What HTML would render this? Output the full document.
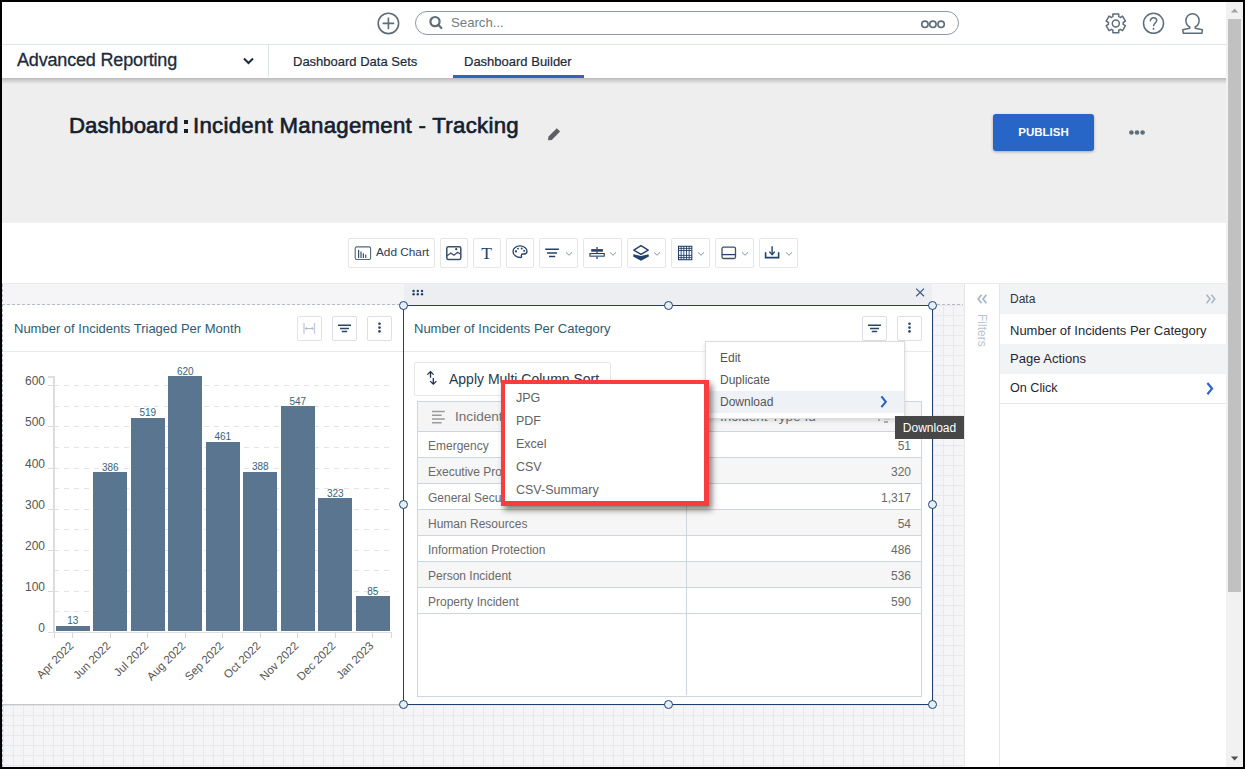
<!DOCTYPE html>
<html><head><meta charset="utf-8">
<style>
*{box-sizing:border-box;margin:0;padding:0}
html,body{width:1245px;height:769px;overflow:hidden;background:#000;font-family:"Liberation Sans",sans-serif}
.abs{position:absolute}
#app{position:absolute;left:2px;top:2px;width:1241px;height:765px;background:#fff;overflow:hidden}
/* everything below positioned with page coords via #pg wrapper offset -2 */
#pg{position:absolute;left:-2px;top:-2px;width:1245px;height:769px}
.t{position:absolute;white-space:nowrap;line-height:1}
</style></head><body>
<div id="app"><div id="pg">

<!-- top bar -->
<div class="abs" style="left:0;top:44px;width:1226px;height:1px;background:#dfe4e7"></div>
<svg class="abs" style="left:376px;top:11px" width="25" height="25" viewBox="0 0 25 25">
  <circle cx="12.4" cy="12.4" r="10.2" fill="none" stroke="#5d6e7a" stroke-width="1.6"/>
  <path d="M12.4 6.6V18.2M6.6 12.4H18.2" stroke="#5d6e7a" stroke-width="1.6"/>
</svg>
<div class="abs" style="left:415px;top:11px;width:544px;height:24px;border:1px solid #8c98a2;border-radius:12px"></div>
<svg class="abs" style="left:427px;top:14px" width="18" height="18" viewBox="0 0 18 18">
  <circle cx="8" cy="7.6" r="4.6" fill="none" stroke="#5d6e7a" stroke-width="2.2"/>
  <path d="M11.2 10.8L14.4 14" stroke="#5d6e7a" stroke-width="2.2" stroke-linecap="round"/>
</svg>
<div class="t" style="left:451px;top:16px;font-size:13.2px;color:#6e7d88">Search...</div>
<svg class="abs" style="left:918px;top:17px" width="30" height="14" viewBox="0 0 30 14">
  <circle cx="6.9" cy="7.3" r="3.2" fill="none" stroke="#5d6e7a" stroke-width="1.6"/>
  <circle cx="14.9" cy="7.3" r="3.2" fill="none" stroke="#5d6e7a" stroke-width="1.6"/>
  <circle cx="23.1" cy="7.3" r="3.2" fill="none" stroke="#5d6e7a" stroke-width="1.6"/>
</svg>
<!-- gear -->
<svg class="abs" style="left:1104px;top:12px" width="23" height="23" viewBox="0 0 23 23">
  <path id="gear" fill="none" stroke="#5d6e7a" stroke-width="1.5" stroke-linejoin="round" d="M8.92 4.58 L8.87 1.94 L14.73 1.94 L14.68 4.58 A7.4 7.4 0 0 1 16.26 5.50 L18.53 4.14 L21.45 9.20 L19.14 10.49 A7.4 7.4 0 0 1 19.14 12.31 L21.45 13.60 L18.53 18.66 L16.26 17.30 A7.4 7.4 0 0 1 14.68 18.22 L14.73 20.86 L8.87 20.86 L8.92 18.22 A7.4 7.4 0 0 1 7.34 17.30 L5.07 18.66 L2.15 13.60 L4.46 12.31 A7.4 7.4 0 0 1 4.46 10.49 L2.15 9.20 L5.07 4.14 L7.34 5.50 A7.4 7.4 0 0 1 8.92 4.58 Z"/>
  <circle cx="11.8" cy="11.4" r="3.5" fill="none" stroke="#5d6e7a" stroke-width="1.5"/>
</svg>
<svg class="abs" style="left:1142px;top:12px" width="23" height="23" viewBox="0 0 23 23">
  <circle cx="11.5" cy="11.3" r="10" fill="none" stroke="#5d6e7a" stroke-width="1.5"/>
  <path d="M8.4 8.8C8.4 6.9 9.8 5.8 11.6 5.8C13.4 5.8 14.7 7 14.7 8.6C14.7 10.4 12.2 11 11.6 13.6" fill="none" stroke="#5d6e7a" stroke-width="1.5" stroke-linecap="round"/>
  <circle cx="11.5" cy="16.7" r="1" fill="#5d6e7a"/>
</svg>
<svg class="abs" style="left:1181px;top:12px" width="23" height="23" viewBox="0 0 23 23">
  <path d="M8.8 16.3V14.9C6.4 13.7 4.9 11.3 4.9 8.4C4.9 4.8 7.8 1.8 11.5 1.8C15.2 1.8 18.1 4.8 18.1 8.4C18.1 11.3 16.6 13.7 14.2 14.9V16.3L21.4 17.8L20.9 21.3H2.3L1.8 17.8Z" fill="none" stroke="#5d6e7a" stroke-width="1.5" stroke-linejoin="round"/>
</svg>

<!-- nav -->
<div class="t" style="left:17px;top:51px;font-size:18px;letter-spacing:-0.17px;-webkit-text-stroke:0.3px #1c2b39;color:#1c2b39">Advanced Reporting</div>
<svg class="abs" style="left:242px;top:56px" width="13" height="10" viewBox="0 0 13 10">
  <path d="M2 2.5L6.5 7L11 2.5" fill="none" stroke="#1c2b39" stroke-width="2"/>
</svg>
<div class="abs" style="left:268px;top:45px;width:1px;height:32px;background:#dfe4e7"></div>
<div class="t" style="left:293px;top:55px;font-size:13px;-webkit-text-stroke:0.2px #1c2b39;color:#1c2b39">Dashboard Data Sets</div>
<div class="t" style="left:464px;top:55px;font-size:13px;-webkit-text-stroke:0.2px #1c2b39;color:#1c2b39">Dashboard Builder</div>
<div class="abs" style="left:453px;top:75px;width:131px;height:4px;background:#2a66c8"></div>

<!-- gray title area -->
<div class="abs" style="left:0;top:78px;width:1226px;height:145px;background:#eeeeee"></div>
<div class="abs" style="left:0;top:78px;width:1226px;height:6px;background:linear-gradient(rgba(0,0,0,.22),rgba(0,0,0,0))"></div>


<div class="t" style="left:69px;top:115px;font-size:22.2px;letter-spacing:0.1px;-webkit-text-stroke:0.65px #13202e;color:#13202e">Dashboard</div>
<div class="abs" style="left:184px;top:120px;width:4px;height:4px;background:#13202e"></div>
<div class="abs" style="left:184px;top:129px;width:4px;height:4px;background:#13202e"></div>
<div class="t" style="left:193px;top:115px;font-size:22.2px;letter-spacing:0.3px;-webkit-text-stroke:0.65px #13202e;color:#13202e">Incident Management - Tracking</div>
<svg class="abs" style="left:547px;top:126px" width="14" height="15" viewBox="0 0 14 15">
  <path d="M1 14.2L1.5 10.6L9.8 2.3L13.1 5.6L4.8 13.9Z" fill="#5e5f66"/>
</svg>
<div class="abs" style="left:993px;top:114px;width:101px;height:37px;background:#2766c6;border-radius:3px;box-shadow:0 1px 3px rgba(0,0,0,.3)"></div>
<div class="t" style="left:993px;top:127px;width:101px;text-align:center;font-size:11.5px;font-weight:bold;color:#fff">PUBLISH</div>
<svg class="abs" style="left:1126px;top:127px" width="22" height="10" viewBox="0 0 22 10">
  <circle cx="5.4" cy="5.5" r="2.3" fill="#5d6e7a"/><circle cx="11" cy="5.5" r="2.3" fill="#5d6e7a"/><circle cx="16.6" cy="5.5" r="2.3" fill="#5d6e7a"/>
</svg>

<!-- toolbar -->
<div class="abs" style="left:348px;top:238px;width:87px;height:30px;border:1px solid #e6e6e6;border-radius:2px"></div>
<svg class="abs" style="left:354px;top:246px" width="18" height="15" viewBox="0 0 18 15">
  <rect x="1.2" y="0.9" width="15.4" height="12.6" rx="1.5" fill="none" stroke="#55657a" stroke-width="1.1"/>
  <path d="M4.6 4V12M7 5.5V12M9.4 7.2V12M11.8 8.4V12" stroke="#3b4f6b" stroke-width="1.2"/>
</svg>
<div class="t" style="left:376px;top:247px;font-size:11.8px;color:#2b3d55">Add Chart</div>
<div class="abs" style="left:440px;top:238px;width:28px;height:30px;border:1px solid #e6e6e6;border-radius:2px"></div>
<svg class="abs" style="left:445px;top:245px" width="18" height="16" viewBox="0 0 18 16">
  <rect x="1.8" y="1.8" width="14" height="12.6" rx="1.5" fill="none" stroke="#3b4f6b" stroke-width="1.5"/>
  <path d="M1.8 11L5.8 8L9 10.3L12.6 7.2L15.8 9.2" fill="none" stroke="#3b4f6b" stroke-width="1.2"/>
  <circle cx="11.2" cy="4.2" r="1.1" fill="#2b3d55"/>
</svg>
<div class="abs" style="left:473px;top:238px;width:28px;height:30px;border:1px solid #e6e6e6;border-radius:2px"></div>
<div class="t" style="left:481.3px;top:245px;font-family:'Liberation Serif',serif;font-size:17.5px;color:#23426b">T</div>
<div class="abs" style="left:506px;top:238px;width:28px;height:30px;border:1px solid #e6e6e6;border-radius:2px"></div>
<svg class="abs" style="left:511px;top:244px" width="18" height="16" viewBox="0 0 18 16">
  <path d="M9.8 13.5C5.4 13.5 2 10.6 2 7.4C2 4.2 5.2 1.9 9 1.9C12.8 1.9 16 4.2 16 7.2C16 9 14.6 10 13 10H11.8C10.9 10 10.3 10.7 10.3 11.4C10.3 11.9 10.6 12.2 10.6 12.7C10.6 13.2 10.3 13.5 9.8 13.5Z" fill="none" stroke="#23426b" stroke-width="1.3"/>
  <circle cx="4.9" cy="7.4" r="1.1" fill="#23426b"/><circle cx="7" cy="4.6" r="0.95" fill="#23426b"/><circle cx="10.7" cy="4.5" r="0.95" fill="#23426b"/><circle cx="13.1" cy="6.7" r="0.95" fill="#23426b"/>
</svg>
<div class="abs" style="left:539px;top:238px;width:39px;height:30px;border:1px solid #e6e6e6;border-radius:2px"></div>
<svg class="abs" style="left:544px;top:243px" width="20" height="20" viewBox="0 0 20 20"><path d="M1.2 6.2H14.9M3 10H13M5 13.4H11.2" stroke="#23426b" stroke-width="1.5"/></svg>
<svg class="abs" style="left:565px;top:251px" width="8" height="6" viewBox="0 0 8 6"><path d="M1 1.4L4 4.2L7 1.4" fill="none" stroke="#8194b8" stroke-width="1"/></svg>
<div class="abs" style="left:583px;top:238px;width:39px;height:30px;border:1px solid #e6e6e6;border-radius:2px"></div>
<svg class="abs" style="left:588px;top:243px" width="20" height="20" viewBox="0 0 20 20"><rect x="3.2" y="6.1" width="11.7" height="2.6" fill="#23426b"/><rect x="1.95" y="10.55" width="14.3" height="2.6" fill="none" stroke="#23426b" stroke-width="1.1"/><path d="M9 4V6.1M9 8.7V10M9 13.7V15.9" stroke="#23426b" stroke-width="1.3"/></svg>
<svg class="abs" style="left:609px;top:251px" width="8" height="6" viewBox="0 0 8 6"><path d="M1 1.4L4 4.2L7 1.4" fill="none" stroke="#8194b8" stroke-width="1"/></svg>
<div class="abs" style="left:627px;top:238px;width:39px;height:30px;border:1px solid #e6e6e6;border-radius:2px"></div>
<svg class="abs" style="left:632px;top:243px" width="20" height="20" viewBox="0 0 20 20"><path d="M9 2.6L16.2 7.1L9 11.3L1.8 7.1Z" fill="none" stroke="#23426b" stroke-width="1.4" stroke-linejoin="round"/><path d="M1.5 11.2L9 12.9L16.5 11.2L16.9 13.4L9 17.8L1.1 13.4Z" fill="#23426b"/></svg>
<svg class="abs" style="left:653px;top:251px" width="8" height="6" viewBox="0 0 8 6"><path d="M1 1.4L4 4.2L7 1.4" fill="none" stroke="#8194b8" stroke-width="1"/></svg>
<div class="abs" style="left:671px;top:238px;width:39px;height:30px;border:1px solid #e6e6e6;border-radius:2px"></div>
<svg class="abs" style="left:676px;top:243px" width="20" height="20" viewBox="0 0 20 20"><rect x="2.5" y="3.3" width="13.3" height="13.4" fill="none" stroke="#23426b" stroke-width="1.1"/><path d="M5.15 3.3V16.7M7.8 3.3V16.7M10.5 3.3V16.7M13.15 3.3V16.7M2.5 5.4H15.8M2.5 7.5H15.8M2.5 12.4H15.8M2.5 14.6H15.8" stroke="#23426b" stroke-width="0.9"/></svg>
<svg class="abs" style="left:697px;top:251px" width="8" height="6" viewBox="0 0 8 6"><path d="M1 1.4L4 4.2L7 1.4" fill="none" stroke="#8194b8" stroke-width="1"/></svg>
<div class="abs" style="left:715px;top:238px;width:39px;height:30px;border:1px solid #e6e6e6;border-radius:2px"></div>
<svg class="abs" style="left:720px;top:243px" width="20" height="20" viewBox="0 0 20 20"><rect x="2" y="4.2" width="13.5" height="11.3" rx="1.5" fill="none" stroke="#3b4f6b" stroke-width="1.3"/><path d="M2 11.6H15.5" stroke="#23426b" stroke-width="1.3"/></svg>
<svg class="abs" style="left:741px;top:251px" width="8" height="6" viewBox="0 0 8 6"><path d="M1 1.4L4 4.2L7 1.4" fill="none" stroke="#8194b8" stroke-width="1"/></svg>
<div class="abs" style="left:759px;top:238px;width:39px;height:30px;border:1px solid #e6e6e6;border-radius:2px"></div>
<svg class="abs" style="left:764px;top:243px" width="20" height="20" viewBox="0 0 20 20"><path d="M1.6 9.2V14.6H14.6V9.2" fill="none" stroke="#23426b" stroke-width="1.6"/><path d="M8.1 3.3V11" stroke="#23426b" stroke-width="1.4"/><path d="M5.4 8.6L8.1 11.6L10.8 8.6" fill="none" stroke="#23426b" stroke-width="1.4"/></svg>
<svg class="abs" style="left:785px;top:251px" width="8" height="6" viewBox="0 0 8 6"><path d="M1 1.4L4 4.2L7 1.4" fill="none" stroke="#8194b8" stroke-width="1"/></svg>

<!-- DASH -->
<div class="abs" style="left:0;top:284px;width:964px;height:486px;background:#f5f5f7"></div>
<div class="abs" style="left:0;top:305px;width:963px;height:464px;background-image:linear-gradient(to right,#e9e9ec 1px,transparent 1px),linear-gradient(to bottom,#e9e9ec 1px,transparent 1px);background-size:10px 10px;background-position:3px 10px"></div>
<div class="abs" style="left:0;top:283px;width:1226px;height:1px;background:#ebebed"></div>
<div class="abs" style="left:2px;top:304px;width:961px;height:1px;background-image:linear-gradient(to right,#b4bcc6 60%,transparent 60%);background-size:5px 1px"></div>
<div class="abs" style="left:3px;top:305px;width:401px;height:399px;background:#fff;box-shadow:0 1px 1px rgba(0,0,0,.18)"></div>
<div class="abs" style="left:2px;top:284px;width:1px;height:485px;background-image:linear-gradient(to bottom,#b4bcc6 60%,transparent 60%);background-size:1px 5px"></div>
<div class="t" style="left:14px;top:322px;font-size:13px;color:#2c5d74">Number of Incidents Triaged Per Month</div>
<div class="abs" style="left:3px;top:351px;width:400px;height:1px;background:#e8eaed"></div>
<div class="abs" style="left:297px;top:316px;width:25px;height:25px;border:1px solid #dcdfe3;border-radius:2px;opacity:0.9"></div><svg class="abs" style="left:297px;top:316px;opacity:0.9" width="25" height="25" viewBox="0 0 25 25"><path d="M7 7V17.7M17.5 7V17.7" stroke="#bcc6d3" stroke-width="1.3"/><path d="M8.2 12.5H16.3M9.8 11L8.3 12.5L9.8 14M14.7 11L16.2 12.5L14.7 14" fill="none" stroke="#a9b5c4" stroke-width="1"/></svg>
<div class="abs" style="left:332px;top:316px;width:25px;height:25px;border:1px solid #dcdfe3;border-radius:2px;opacity:1"></div><svg class="abs" style="left:332px;top:316px;opacity:1" width="25" height="25" viewBox="0 0 25 25"><path d="M6 9.2H19M8 12.4H17M9.8 15.5H15.2" stroke="#2b4566" stroke-width="1.5"/></svg>
<div class="abs" style="left:367px;top:316px;width:25px;height:25px;border:1px solid #dcdfe3;border-radius:2px;opacity:1"></div><svg class="abs" style="left:367px;top:316px;opacity:1" width="25" height="25" viewBox="0 0 25 25"><circle cx="12.5" cy="7.8" r="1.3" fill="#2b4566"/><circle cx="12.5" cy="11.6" r="1.3" fill="#2b4566"/><circle cx="12.5" cy="15.4" r="1.3" fill="#2b4566"/></svg>
<div class="abs" style="left:55px;top:611px;width:334px;height:1px;background-image:linear-gradient(to right,#e3e3e3 50%,transparent 50%);background-size:10px 1px;background-position:-1px 0"></div>
<div class="abs" style="left:55px;top:591px;width:334px;height:1px;background-image:linear-gradient(to right,#e3e3e3 50%,transparent 50%);background-size:10px 1px;background-position:-1px 0"></div>
<div class="abs" style="left:55px;top:570px;width:334px;height:1px;background-image:linear-gradient(to right,#e3e3e3 50%,transparent 50%);background-size:10px 1px;background-position:-1px 0"></div>
<div class="abs" style="left:55px;top:550px;width:334px;height:1px;background-image:linear-gradient(to right,#e3e3e3 50%,transparent 50%);background-size:10px 1px;background-position:-1px 0"></div>
<div class="abs" style="left:55px;top:529px;width:334px;height:1px;background-image:linear-gradient(to right,#e3e3e3 50%,transparent 50%);background-size:10px 1px;background-position:-1px 0"></div>
<div class="abs" style="left:55px;top:509px;width:334px;height:1px;background-image:linear-gradient(to right,#e3e3e3 50%,transparent 50%);background-size:10px 1px;background-position:-1px 0"></div>
<div class="abs" style="left:55px;top:488px;width:334px;height:1px;background-image:linear-gradient(to right,#e3e3e3 50%,transparent 50%);background-size:10px 1px;background-position:-1px 0"></div>
<div class="abs" style="left:55px;top:468px;width:334px;height:1px;background-image:linear-gradient(to right,#e3e3e3 50%,transparent 50%);background-size:10px 1px;background-position:-1px 0"></div>
<div class="abs" style="left:55px;top:447px;width:334px;height:1px;background-image:linear-gradient(to right,#e3e3e3 50%,transparent 50%);background-size:10px 1px;background-position:-1px 0"></div>
<div class="abs" style="left:55px;top:426px;width:334px;height:1px;background-image:linear-gradient(to right,#e3e3e3 50%,transparent 50%);background-size:10px 1px;background-position:-1px 0"></div>
<div class="abs" style="left:55px;top:406px;width:334px;height:1px;background-image:linear-gradient(to right,#e3e3e3 50%,transparent 50%);background-size:10px 1px;background-position:-1px 0"></div>
<div class="abs" style="left:55px;top:385px;width:334px;height:1px;background-image:linear-gradient(to right,#e3e3e3 50%,transparent 50%);background-size:10px 1px;background-position:-1px 0"></div>
<div class="abs" style="left:48px;top:632px;width:6px;height:1px;background:#d9d9d9"></div>
<div class="t" style="left:15px;top:622px;width:30px;text-align:right;font-size:12px;color:#555">0</div>
<div class="abs" style="left:48px;top:591px;width:6px;height:1px;background:#d9d9d9"></div>
<div class="t" style="left:15px;top:581px;width:30px;text-align:right;font-size:12px;color:#555">100</div>
<div class="abs" style="left:48px;top:550px;width:6px;height:1px;background:#d9d9d9"></div>
<div class="t" style="left:15px;top:540px;width:30px;text-align:right;font-size:12px;color:#555">200</div>
<div class="abs" style="left:48px;top:509px;width:6px;height:1px;background:#d9d9d9"></div>
<div class="t" style="left:15px;top:499px;width:30px;text-align:right;font-size:12px;color:#555">300</div>
<div class="abs" style="left:48px;top:468px;width:6px;height:1px;background:#d9d9d9"></div>
<div class="t" style="left:15px;top:458px;width:30px;text-align:right;font-size:12px;color:#555">400</div>
<div class="abs" style="left:48px;top:426px;width:6px;height:1px;background:#d9d9d9"></div>
<div class="t" style="left:15px;top:416px;width:30px;text-align:right;font-size:12px;color:#555">500</div>
<div class="abs" style="left:48px;top:385px;width:6px;height:1px;background:#d9d9d9"></div>
<div class="t" style="left:15px;top:375px;width:30px;text-align:right;font-size:12px;color:#555">600</div>
<div class="abs" style="left:53px;top:376px;width:2px;height:257px;background:#dcdcdc"></div>
<div class="abs" style="left:48px;top:376px;width:6px;height:1.5px;background:#dedede"></div>
<div class="abs" style="left:48px;top:632px;width:344px;height:1px;background:#e0e0e0"></div>
<div class="abs" style="left:54px;top:632px;width:1px;height:6px;background:#d9d9d9"></div>
<div class="abs" style="left:391px;top:632px;width:1px;height:6px;background:#d9d9d9"></div>
<div class="abs" style="left:55.9px;top:625.7px;width:33.9px;height:5.3px;background:#5a758f"></div>
<div class="t" style="left:45.9px;top:616.2px;width:53.9px;text-align:center;font-size:10px;color:#346579">13</div>
<div class="abs" style="left:72.3px;top:632px;width:1px;height:6px;background:#d9d9d9"></div>
<div class="t" style="left:7.8px;top:640px;width:60px;text-align:right;font-size:11.5px;color:#555;transform-origin:100% 0;transform:rotate(-45deg)">Apr 2022</div>
<div class="abs" style="left:93.4px;top:472.4px;width:33.9px;height:158.6px;background:#5a758f"></div>
<div class="t" style="left:83.4px;top:462.9px;width:53.9px;text-align:center;font-size:10px;color:#346579">386</div>
<div class="abs" style="left:109.9px;top:632px;width:1px;height:6px;background:#d9d9d9"></div>
<div class="t" style="left:45.4px;top:640px;width:60px;text-align:right;font-size:11.5px;color:#555;transform-origin:100% 0;transform:rotate(-45deg)">Jun 2022</div>
<div class="abs" style="left:130.9px;top:417.7px;width:33.9px;height:213.3px;background:#5a758f"></div>
<div class="t" style="left:120.9px;top:408.2px;width:53.9px;text-align:center;font-size:10px;color:#346579">519</div>
<div class="abs" style="left:147.3px;top:632px;width:1px;height:6px;background:#d9d9d9"></div>
<div class="t" style="left:82.8px;top:640px;width:60px;text-align:right;font-size:11.5px;color:#555;transform-origin:100% 0;transform:rotate(-45deg)">Jul 2022</div>
<div class="abs" style="left:168.4px;top:376.2px;width:33.9px;height:254.8px;background:#5a758f"></div>
<div class="t" style="left:158.4px;top:366.7px;width:53.9px;text-align:center;font-size:10px;color:#346579">620</div>
<div class="abs" style="left:184.8px;top:632px;width:1px;height:6px;background:#d9d9d9"></div>
<div class="t" style="left:120.3px;top:640px;width:60px;text-align:right;font-size:11.5px;color:#555;transform-origin:100% 0;transform:rotate(-45deg)">Aug 2022</div>
<div class="abs" style="left:205.9px;top:441.5px;width:33.9px;height:189.5px;background:#5a758f"></div>
<div class="t" style="left:195.9px;top:432.0px;width:53.9px;text-align:center;font-size:10px;color:#346579">461</div>
<div class="abs" style="left:222.3px;top:632px;width:1px;height:6px;background:#d9d9d9"></div>
<div class="t" style="left:157.8px;top:640px;width:60px;text-align:right;font-size:11.5px;color:#555;transform-origin:100% 0;transform:rotate(-45deg)">Sep 2022</div>
<div class="abs" style="left:243.4px;top:471.5px;width:33.9px;height:159.5px;background:#5a758f"></div>
<div class="t" style="left:233.4px;top:462.0px;width:53.9px;text-align:center;font-size:10px;color:#346579">388</div>
<div class="abs" style="left:259.9px;top:632px;width:1px;height:6px;background:#d9d9d9"></div>
<div class="t" style="left:195.4px;top:640px;width:60px;text-align:right;font-size:11.5px;color:#555;transform-origin:100% 0;transform:rotate(-45deg)">Oct 2022</div>
<div class="abs" style="left:280.9px;top:406.2px;width:33.9px;height:224.8px;background:#5a758f"></div>
<div class="t" style="left:270.9px;top:396.7px;width:53.9px;text-align:center;font-size:10px;color:#346579">547</div>
<div class="abs" style="left:297.3px;top:632px;width:1px;height:6px;background:#d9d9d9"></div>
<div class="t" style="left:232.8px;top:640px;width:60px;text-align:right;font-size:11.5px;color:#555;transform-origin:100% 0;transform:rotate(-45deg)">Nov 2022</div>
<div class="abs" style="left:318.4px;top:498.2px;width:33.9px;height:132.8px;background:#5a758f"></div>
<div class="t" style="left:308.4px;top:488.7px;width:53.9px;text-align:center;font-size:10px;color:#346579">323</div>
<div class="abs" style="left:334.8px;top:632px;width:1px;height:6px;background:#d9d9d9"></div>
<div class="t" style="left:270.3px;top:640px;width:60px;text-align:right;font-size:11.5px;color:#555;transform-origin:100% 0;transform:rotate(-45deg)">Dec 2022</div>
<div class="abs" style="left:355.9px;top:596.1px;width:33.9px;height:34.9px;background:#5a758f"></div>
<div class="t" style="left:345.9px;top:586.6px;width:53.9px;text-align:center;font-size:10px;color:#346579">85</div>
<div class="abs" style="left:372.3px;top:632px;width:1px;height:6px;background:#d9d9d9"></div>
<div class="t" style="left:307.8px;top:640px;width:60px;text-align:right;font-size:11.5px;color:#555;transform-origin:100% 0;transform:rotate(-45deg)">Jan 2023</div>
<div class="abs" style="left:404px;top:284px;width:528px;height:21px;background:#eceef2"></div>
<svg class="abs" style="left:411px;top:288px" width="14" height="9" viewBox="0 0 14 9"><g fill="#24406a"><circle cx="2.6" cy="3" r="1.2"/><circle cx="6.8" cy="3" r="1.2"/><circle cx="11" cy="3" r="1.2"/><circle cx="2.6" cy="6.3" r="1.2"/><circle cx="6.8" cy="6.3" r="1.2"/><circle cx="11" cy="6.3" r="1.2"/></g></svg>
<svg class="abs" style="left:914px;top:286px" width="12" height="12" viewBox="0 0 12 12"><path d="M2.2 2.6L10 10.2M10 2.6L2.2 10.2" stroke="#3c5b86" stroke-width="1.2"/></svg>
<div class="abs" style="left:403px;top:305px;width:530px;height:400px;background:#fff;border:1px solid #1f406b"></div>
<div class="t" style="left:414px;top:322px;font-size:13px;color:#2c5d74">Number of Incidents Per Category</div>
<div class="abs" style="left:404px;top:351px;width:528px;height:1px;background:#e8eaed"></div>
<div class="abs" style="left:862px;top:316px;width:25px;height:25px;border:1px solid #dcdfe3;border-radius:2px;opacity:1"></div><svg class="abs" style="left:862px;top:316px;opacity:1" width="25" height="25" viewBox="0 0 25 25"><path d="M6 9.2H19M8 12.4H17M9.8 15.5H15.2" stroke="#2b4566" stroke-width="1.5"/></svg>
<div class="abs" style="left:897px;top:316px;width:25px;height:25px;border:1px solid #dcdfe3;border-radius:2px;opacity:1"></div><svg class="abs" style="left:897px;top:316px;opacity:1" width="25" height="25" viewBox="0 0 25 25"><circle cx="12.5" cy="7.8" r="1.3" fill="#2b4566"/><circle cx="12.5" cy="11.6" r="1.3" fill="#2b4566"/><circle cx="12.5" cy="15.4" r="1.3" fill="#2b4566"/></svg>
<div class="abs" style="left:414px;top:362px;width:197px;height:34px;border:1px solid #e6e8ea;border-radius:2px"></div>
<svg class="abs" style="left:424px;top:369px" width="16" height="18" viewBox="0 0 16 18"><path d="M6.5 8.8V3M3.4 5.6L6.5 2.6L9.6 5.6M9.3 9V15M6.2 12.1L9.3 15.1L12.4 12.1" fill="none" stroke="#1e3148" stroke-width="1.3"/></svg>
<div class="t" style="left:449px;top:372px;font-size:14px;color:#2d3b48">Apply Multi Column Sort</div>
<div class="abs" style="left:417px;top:401px;width:505px;height:296px;border:1px solid #cfd5dd;background:#fff"></div>
<div class="abs" style="left:418px;top:402px;width:503px;height:30px;background:#f5f5f5;border-bottom:1px solid #cfd5dd"></div>
<svg class="abs" style="left:430px;top:409px" width="16" height="16" viewBox="0 0 16 16"><path d="M2 2.6H14.8M2 6.3H11.6M2 10H14.8M2 13.7H11.6" stroke="#9a9a9a" stroke-width="1.5"/></svg>
<div class="t" style="left:455px;top:410px;font-size:13.6px;color:#707070">Incident Type</div>
<div class="t" style="left:720px;top:410px;font-size:13.6px;color:#707070">Incident Type Id</div>
<svg class="abs" style="left:875px;top:409px" width="20" height="16" viewBox="0 0 20 16"><path d="M4 12V4M2 6L4 4L6 6M9 6H17M9 9.5H15M9 13H13" fill="none" stroke="#9a9a9a" stroke-width="1.4"/></svg>
<div class="abs" style="left:686px;top:402px;width:1px;height:293px;background:#cfd5dd"></div>
<div class="abs" style="left:418px;top:432px;width:503px;height:26px;background:#fff;border-bottom:1px solid #cfd5dd"></div>
<div class="t" style="left:428px;top:440px;font-size:12px;color:#6a6a6a">Emergency</div>
<div class="t" style="left:811px;top:440px;width:100px;text-align:right;font-size:12px;color:#6a6a6a">51</div>
<div class="abs" style="left:418px;top:458px;width:503px;height:26px;background:#f6f6f6;border-bottom:1px solid #cfd5dd"></div>
<div class="t" style="left:428px;top:466px;font-size:12px;color:#6a6a6a">Executive Protection</div>
<div class="t" style="left:811px;top:466px;width:100px;text-align:right;font-size:12px;color:#6a6a6a">320</div>
<div class="abs" style="left:418px;top:484px;width:503px;height:26px;background:#fff;border-bottom:1px solid #cfd5dd"></div>
<div class="t" style="left:428px;top:492px;font-size:12px;color:#6a6a6a">General Security</div>
<div class="t" style="left:811px;top:492px;width:100px;text-align:right;font-size:12px;color:#6a6a6a">1,317</div>
<div class="abs" style="left:418px;top:510px;width:503px;height:26px;background:#f6f6f6;border-bottom:1px solid #cfd5dd"></div>
<div class="t" style="left:428px;top:518px;font-size:12px;color:#6a6a6a">Human Resources</div>
<div class="t" style="left:811px;top:518px;width:100px;text-align:right;font-size:12px;color:#6a6a6a">54</div>
<div class="abs" style="left:418px;top:536px;width:503px;height:26px;background:#fff;border-bottom:1px solid #cfd5dd"></div>
<div class="t" style="left:428px;top:544px;font-size:12px;color:#6a6a6a">Information Protection</div>
<div class="t" style="left:811px;top:544px;width:100px;text-align:right;font-size:12px;color:#6a6a6a">486</div>
<div class="abs" style="left:418px;top:562px;width:503px;height:26px;background:#f6f6f6;border-bottom:1px solid #cfd5dd"></div>
<div class="t" style="left:428px;top:570px;font-size:12px;color:#6a6a6a">Person Incident</div>
<div class="t" style="left:811px;top:570px;width:100px;text-align:right;font-size:12px;color:#6a6a6a">536</div>
<div class="abs" style="left:418px;top:588px;width:503px;height:26px;background:#fff;border-bottom:1px solid #cfd5dd"></div>
<div class="t" style="left:428px;top:596px;font-size:12px;color:#6a6a6a">Property Incident</div>
<div class="t" style="left:811px;top:596px;width:100px;text-align:right;font-size:12px;color:#6a6a6a">590</div>
<div class="abs" style="left:686px;top:402px;width:1px;height:293px;background:#cfd5dd"></div>
<div class="abs" style="left:399.1px;top:301.0px;width:9px;height:9px;border-radius:50%;background:#e4eff9;border:1.5px solid #1f406b"></div>
<div class="abs" style="left:663.5px;top:301.0px;width:9px;height:9px;border-radius:50%;background:#e4eff9;border:1.5px solid #1f406b"></div>
<div class="abs" style="left:927.8px;top:301.0px;width:9px;height:9px;border-radius:50%;background:#e4eff9;border:1.5px solid #1f406b"></div>
<div class="abs" style="left:399.1px;top:500.0px;width:9px;height:9px;border-radius:50%;background:#e4eff9;border:1.5px solid #1f406b"></div>
<div class="abs" style="left:927.8px;top:500.0px;width:9px;height:9px;border-radius:50%;background:#e4eff9;border:1.5px solid #1f406b"></div>
<div class="abs" style="left:399.1px;top:699.7px;width:9px;height:9px;border-radius:50%;background:#e4eff9;border:1.5px solid #1f406b"></div>
<div class="abs" style="left:663.5px;top:699.7px;width:9px;height:9px;border-radius:50%;background:#e4eff9;border:1.5px solid #1f406b"></div>
<div class="abs" style="left:927.8px;top:699.7px;width:9px;height:9px;border-radius:50%;background:#e4eff9;border:1.5px solid #1f406b"></div>
<div class="abs" style="left:705px;top:341px;width:200px;height:78px;background:#fff;border:1px solid #dcdcdc;box-shadow:0 2px 4px rgba(0,0,0,.12)"></div>
<div class="abs" style="left:706px;top:391px;width:198px;height:22px;background:#eef1f5"></div>
<div class="t" style="left:720px;top:352px;font-size:12px;color:#555">Edit</div>
<div class="t" style="left:720px;top:374px;font-size:12px;color:#555">Duplicate</div>
<div class="t" style="left:720px;top:396px;font-size:12px;color:#555">Download</div>
<svg class="abs" style="left:878px;top:394px" width="12" height="16" viewBox="0 0 12 16"><path d="M3.4 2.4L7.8 7.8L3.4 13.2" fill="none" stroke="#2a63c9" stroke-width="2.1"/></svg>
<div class="abs" style="left:895px;top:416px;width:69px;height:23px;background:#474747"></div>
<div class="t" style="left:895px;top:422px;width:69px;text-align:center;font-size:12px;color:#fff">Download</div>
<div class="abs" style="left:501px;top:380px;width:208px;height:126px;background:#fff;border:4px solid #f83d3f;border-right-width:5px;border-bottom-width:5px;box-shadow:3px 4px 6px rgba(0,0,0,.5)"></div>
<div class="t" style="left:516px;top:392px;font-size:12.5px;color:#626262">JPG</div>
<div class="t" style="left:516px;top:415px;font-size:12.5px;color:#626262">PDF</div>
<div class="t" style="left:516px;top:438px;font-size:12.5px;color:#626262">Excel</div>
<div class="t" style="left:516px;top:461px;font-size:12.5px;color:#626262">CSV</div>
<div class="t" style="left:516px;top:484px;font-size:12.5px;color:#626262">CSV-Summary</div>
<div class="abs" style="left:964px;top:284px;width:36px;height:486px;background:#fff;border-left:1px solid #e6e6e6;border-right:1px solid #e6e6e6"></div>
<svg class="abs" style="left:975px;top:293px" width="14" height="12" viewBox="0 0 14 12"><path d="M6.6 1.8L3.2 6L6.6 10.2M11.4 1.8L8 6L11.4 10.2" fill="none" stroke="#a9b7ca" stroke-width="1.8"/></svg>
<div class="t" style="left:974px;top:314px;font-size:12px;color:#b9c4d2;transform-origin:0 0;transform:translate(14px,0) rotate(90deg)">Filters</div>
<div class="abs" style="left:1000px;top:284px;width:226px;height:30px;background:#f2f3f5"></div>
<div class="t" style="left:1010px;top:293px;font-size:12px;color:#2e3440">Data</div>
<svg class="abs" style="left:1204px;top:293px" width="14" height="12" viewBox="0 0 14 12"><path d="M2.6 1.8L6 6L2.6 10.2M7.4 1.8L10.8 6L7.4 10.2" fill="none" stroke="#a9b7ca" stroke-width="1.6"/></svg>
<div class="t" style="left:1010px;top:324px;font-size:13px;color:#1f2733">Number of Incidents Per Category</div>
<div class="abs" style="left:1000px;top:344px;width:226px;height:30px;background:#f2f3f5"></div>
<div class="t" style="left:1010px;top:352px;font-size:13px;color:#1f2733">Page Actions</div>
<div class="t" style="left:1010px;top:382px;font-size:12.6px;color:#1f2733">On Click</div>
<svg class="abs" style="left:1204px;top:381px" width="12" height="16" viewBox="0 0 12 16"><path d="M3.4 2L8 7.6L3.4 13.2" fill="none" stroke="#2a63c9" stroke-width="2.2"/></svg>
<div class="abs" style="left:1000px;top:403px;width:226px;height:1px;background:#e6e6e6"></div>
<div class="abs" style="left:1226px;top:0;width:17px;height:769px;background:#f1f1f1"></div>
<div class="abs" style="left:1228px;top:19px;width:13px;height:573px;background:#c1c1c1"></div>
<svg class="abs" style="left:1226px;top:2px" width="17" height="17" viewBox="0 0 17 17"><path d="M5 10.6L8.6 6.6L12.2 10.6Z" fill="#a3a3a3"/></svg>
<svg class="abs" style="left:1226px;top:749px" width="17" height="17" viewBox="0 0 17 17"><path d="M4.9 7.4L8.6 11.6L12.3 7.4Z" fill="#505050"/></svg>
<!-- /DASH -->
</div></div>
</body></html>
